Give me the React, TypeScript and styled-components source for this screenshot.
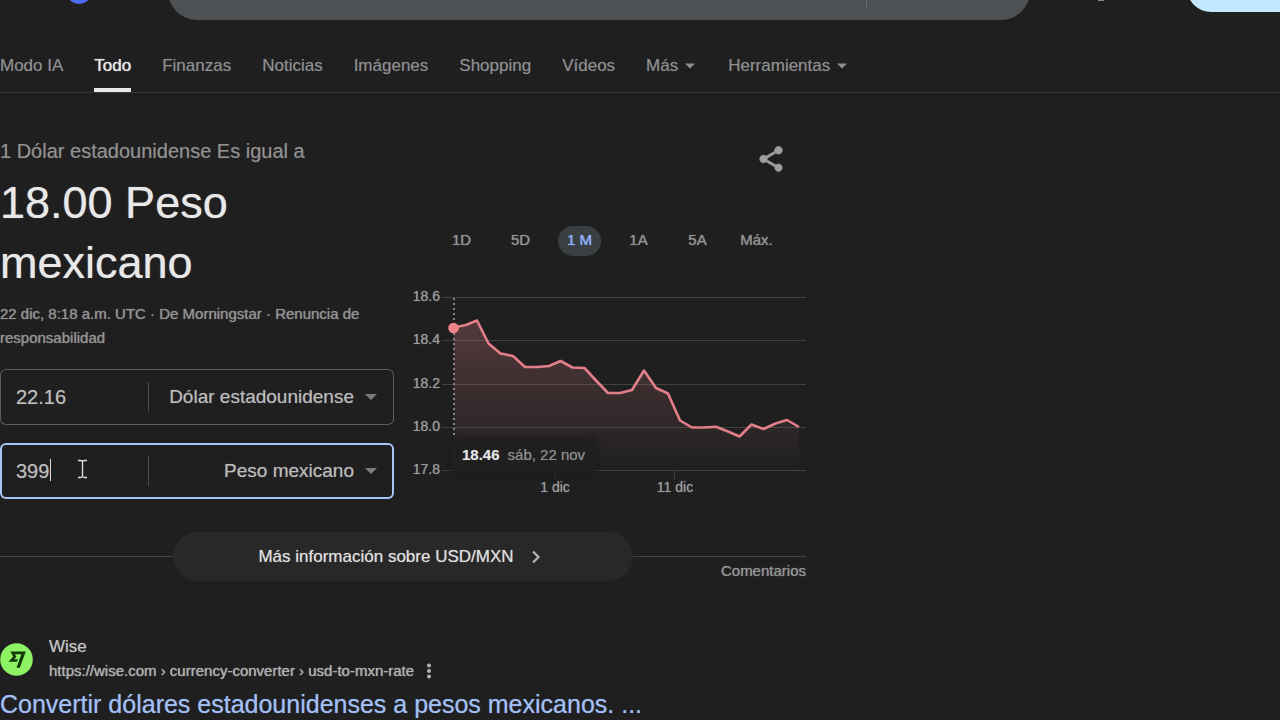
import React from "react";
import styled, { createGlobalStyle } from "styled-components";

const GlobalStyle = createGlobalStyle`
  * { box-sizing: border-box; }
  body {
    margin: 0;
    background: #1f1f1f;
    color: #e8e8e8;
    font-family: "Liberation Sans", Arial, sans-serif;
  }
  button, input, select { font-family: inherit; }
  h1, h2, p { margin: 0; font-weight: 400; }
  a { color: inherit; text-decoration: none; }
`;

const Page = styled.div`
  min-height: 100vh;
  overflow: hidden;
`;

const Header = styled.header`
  display: flex;
  align-items: flex-start;
  height: 20px;
  overflow: hidden;
`;

const Logo = styled.a`
  flex: 0 0 168px;
  height: 20px;
  svg { display: block; }
`;

const SearchForm = styled.form`
  flex: 0 1 862px;
  display: flex;
  align-items: center;
  align-self: flex-end;
  height: 58px;
  padding: 0 163px 0 28px;
  border-radius: 29px;
  background: #4d5154;
`;

const SearchInput = styled.input`
  flex: 1;
  min-width: 0;
  height: 32px;
  padding: 0;
  border: 0;
  border-right: 1px solid #6b6f72;
  outline: 0;
  background: transparent;
  color: #e8e8e8;
  font-size: 20px;
`;

const AppsButton = styled.button`
  display: flex;
  margin: 0 83px 0 68px;
  padding: 0;
  border: 0;
  background: transparent;
`;

const SignIn = styled.button`
  flex: 1 0 120px;
  align-self: flex-end;
  height: 48px;
  margin: 0 -40px 8px 0;
  border: 0;
  border-radius: 24px;
  background: #c2e7ff;
`;

const Nav = styled.nav`
  display: flex;
  gap: 31px;
  height: 73px;
  border-bottom: 1px solid #353535;
`;

const NavLink = styled.a<{ $active?: boolean }>`
  display: flex;
  align-items: center;
  gap: 7px;
  padding-top: 24px;
  border-bottom: 4px solid ${(p) => (p.$active ? "#e8e8e8" : "transparent")};
  color: ${(p) => (p.$active ? "#e8e8e8" : "#8e9092")};
  text-shadow: ${(p) => (p.$active ? "0 0 1px #e8e8e8" : "0 0 1px #505050")};
  font-size: 17px;
  line-height: 24px;
  white-space: nowrap;
`;

const Tools = styled.div`
  display: flex;
  margin-left: 2px;
`;

const Main = styled.main`
  max-width: 806px;
  padding-top: 43px;
`;

const Converter = styled.section`
  display: grid;
  grid-template-columns: 394px 1fr;
`;

const BaseLine = styled.p`
  color: #929292;
  font-size: 20px;
  line-height: 30px;
  text-shadow: 0 0 1px #505050;
`;

const Amount = styled.h1`
  margin-top: 7px;
  max-width: 300px;
  color: #e8e8e8;
  font-size: 45px;
  line-height: 60px;
  text-shadow: 0 0 1px #a0a0a0;
`;

const Meta = styled.p`
  margin-top: 9px;
  color: #929292;
  font-size: 15px;
  line-height: 24px;
  text-shadow: 0 0 1px #929292;
`;

const Fields = styled.div`
  display: grid;
  gap: 18px;
  margin-top: 19px;
`;

const Field = styled.div<{ $focused?: boolean }>`
  position: relative;
  display: flex;
  align-items: center;
  height: 56px;
  padding: 0 17px 0 16px;
  border-radius: 6px;
  box-shadow: inset 0 0 0 ${(p) => (p.$focused ? "2px #a8c3f5" : "1px #5c5e60")};
`;

const ValueInput = styled.input`
  flex: 0 0 133px;
  width: 133px;
  height: 30px;
  padding: 0;
  border: 0;
  border-right: 1px solid #4a4c4e;
  outline: 0;
  background: transparent;
  color: #bdbdbd;
  font-size: 20px;
  line-height: 30px;
  text-shadow: 0 0 1px #707070;
`;

const CurrencySelect = styled.select`
  flex: 1;
  min-width: 0;
  height: 30px;
  margin-right: 11px;
  padding: 0;
  border: 0;
  outline: 0;
  appearance: none;
  background: transparent;
  color: #bdbdbd;
  font-size: 19px;
  line-height: 30px;
  text-align: right;
  text-align-last: right;
  text-shadow: 0 0 1px #707070;
`;

const TextCaret = styled.span`
  position: absolute;
  left: 50px;
  top: 16px;
  width: 1px;
  height: 22px;
  background: #dcdcdc;
`;

const Pointer = styled.svg`
  position: absolute;
  left: 77px;
  top: 16px;
`;

const ChartPane = styled.div`
  display: flex;
  flex-direction: column;
  padding-left: 19px;
`;

const ShareButton = styled.button`
  align-self: flex-end;
  display: flex;
  margin: 8px 20px 0 0;
  padding: 0;
  border: 0;
  background: transparent;
`;

const Ranges = styled.div`
  display: flex;
  gap: 16px;
  margin: 52px 0 0 27px;
`;

const RangeButton = styled.button<{ $active?: boolean }>`
  flex: 0 0 43px;
  height: 30px;
  padding: 0 0 2px;
  border: 0;
  border-radius: 15px;
  background: ${(p) => (p.$active ? "#3a4042" : "transparent")};
  color: ${(p) => (p.$active ? "#8fb0f8" : "#929292")};
  text-shadow: 0 0 1px ${(p) => (p.$active ? "#8fb0f8" : "#929292")};
  font-size: 15px;
  line-height: 28px;
  white-space: nowrap;
`;

const ChartFrame = styled.div`
  position: relative;
  margin-top: 30px;
`;

const ChartSvg = styled.svg`
  display: block;
  width: 100%;
  text {
    font-size: 14px;
    fill: #9a9d9f;
    text-shadow: 0 0 1px #808080;
  }
`;

const Tooltip = styled.div`
  position: absolute;
  left: 39px;
  top: 152px;
  display: flex;
  gap: 8px;
  height: 36px;
  padding: 0 11px 0 10px;
  border-radius: 4px;
  background: #1f1f1f;
  box-shadow: 0 1px 6px #1a1a1a;
  color: #8f8f8f;
  font-size: 15px;
  line-height: 34px;
  white-space: nowrap;
  text-shadow: 0 0 1px #606060;
  strong { color: #e8e8e8; }
`;

const MoreRow = styled.div`
  display: grid;
  grid-template-columns: 1fr 460px 1fr;
  grid-template-rows: 49px;
  margin-top: 33px;
`;

const Rule = styled.div`
  margin-top: 24px;
  padding-top: 2px;
  border-top: 1px solid #444;
  text-align: right;
`;

const MoreLink = styled.a`
  display: flex;
  align-items: center;
  justify-content: center;
  gap: 10px;
  border-radius: 25px;
  background: #282828;
  color: #e0e0e0;
  font-size: 17px;
  text-shadow: 0 0 1px #909090;
`;

const Feedback = styled.a`
  color: #929292;
  font-size: 15px;
  line-height: 24px;
  text-shadow: 0 0 1px #929292;
`;

const Result = styled.article`
  margin-top: 54px;
`;

const Source = styled.div`
  display: flex;
  align-items: center;
  gap: 16px;
`;

const SiteName = styled.div`
  color: #c4c4c4;
  font-size: 17px;
  line-height: 24px;
  text-shadow: 0 0 1px #808080;
`;

const SiteUrl = styled.div`
  display: flex;
  align-items: center;
  gap: 3px;
  color: #b0b0b0;
  font-size: 15px;
  line-height: 24px;
  text-shadow: 0 0 1px #b0b0b0;
`;

const MenuButton = styled.button`
  display: flex;
  padding: 0;
  border: 0;
  background: transparent;
`;

const ResultTitle = styled.h2`
  margin-top: 5px;
  color: #a3c0f5;
  font-size: 25px;
  line-height: 32px;
  white-space: nowrap;
  text-shadow: 0 0 1px #6076a0;
`;

function DownArrow({ size, color }: { size: number; color: string }) {
  return (
    <svg width={size} height={size} viewBox="0 0 12 12" aria-hidden="true">
      <path d="M0 3h12L6 9z" fill={color} />
    </svg>
  );
}

const links = ["Modo IA", "Todo", "Finanzas", "Noticias", "Imágenes", "Shopping", "Vídeos"];
const ranges = ["1D", "5D", "1 M", "1A", "5A", "Máx."];

const gridLines = [
  { y: 11, label: "18.6" },
  { y: 54, label: "18.4" },
  { y: 98, label: "18.2" },
  { y: 141, label: "18.0" },
  { y: 184, label: "17.8" },
];

const rates = [
  [41, 41.5], [53, 39], [64, 34.5], [75.5, 57.5], [87.5, 67.5], [100, 70], [112, 81], [124, 81],
  [136, 80], [147.5, 75], [159.5, 81.5], [171.5, 82], [183.5, 95], [195, 107], [207, 107],
  [219, 104], [231, 84.5], [243, 102], [255, 107.5], [267, 134.5], [279, 141.5], [291, 141.5],
  [303, 140.8], [315, 145.5], [326.5, 150.5], [338.5, 138.5], [350.5, 143], [362.5, 137.5],
  [374, 134], [386, 141],
];
const linePoints = rates.map((p) => p.join(",")).join(" ");

function RateChart() {
  return (
    <ChartFrame>
      <ChartSvg viewBox="0 0 393 210" role="img" aria-label="USD/MXN, 1 M">
        <defs>
          <linearGradient id="fade" gradientUnits="userSpaceOnUse" x1="0" y1="34" x2="0" y2="184">
            <stop offset="0" stopColor="#e8868f" stopOpacity="0.26" />
            <stop offset="1" stopColor="#e8868f" stopOpacity="0" />
          </linearGradient>
        </defs>
        {gridLines.map((g) => (
          <g key={g.label}>
            <rect x="29" y={g.y} width="364" height="1" fill="#414141" />
            <text x="27" y={g.y + 4} textAnchor="end">{g.label}</text>
          </g>
        ))}
        <rect x="142" y="185" width="1" height="8" fill="#414141" />
        <rect x="261" y="185" width="1" height="8" fill="#414141" />
        <text x="142" y="206" textAnchor="middle">1 dic</text>
        <text x="262" y="206" textAnchor="middle">11 dic</text>
        <polygon points={`41,184 ${linePoints} 386,184`} fill="url(#fade)" />
        <line x1="41" y1="12" x2="41" y2="152" stroke="#868686" strokeWidth="2" strokeDasharray="2 3" />
        <polyline points={linePoints} fill="none" stroke="#e27f89" strokeWidth="2.6" strokeLinejoin="round" />
        <circle cx="40.5" cy="42" r="5.3" fill="#f0828c" />
      </ChartSvg>
      <Tooltip>
        <strong>18.46</strong>
        <span>sáb, 22 nov</span>
      </Tooltip>
    </ChartFrame>
  );
}

export default function App() {
  return (
    <Page>
      <GlobalStyle />
      <Header>
        <Logo href="#" aria-label="Google">
          <svg width="168" height="20" viewBox="0 0 168 20" aria-hidden="true">
            <ellipse cx="79" cy="-5" rx="9" ry="7" fill="none" stroke="#4a6cf0" strokeWidth="4" />
          </svg>
        </Logo>
        <SearchForm role="search">
          <SearchInput type="text" aria-label="Buscar" />
        </SearchForm>
        <AppsButton type="button" aria-label="Aplicaciones">
          <svg width="6" height="1" aria-hidden="true"><rect width="6" height="1" fill="#8a8a8a" /></svg>
        </AppsButton>
        <SignIn type="button" aria-label="Acceder" />
      </Header>

      <Nav>
        {links.map((l) => (
          <NavLink key={l} href="#" $active={l === "Todo"}>{l}</NavLink>
        ))}
        <NavLink href="#">Más <DownArrow size={10} color="#8e9092" /></NavLink>
        <Tools>
          <NavLink href="#">Herramientas <DownArrow size={10} color="#8e9092" /></NavLink>
        </Tools>
      </Nav>

      <Main>
        <Converter>
          <div>
            <BaseLine>1 Dólar estadounidense Es igual a</BaseLine>
            <Amount>18.00 Peso mexicano</Amount>
            <Meta>
              <span>22 dic, 8:18 a.m. UTC ·</span> <a href="#">De Morningstar</a> <span>·</span>{" "}
              <a href="#">Renuncia de responsabilidad</a>
            </Meta>
            <Fields>
              <Field>
                <ValueInput aria-label="Importe en dólares" defaultValue="22.16" />
                <CurrencySelect aria-label="Moneda de origen">
                  <option>Dólar estadounidense</option>
                </CurrencySelect>
                <DownArrow size={12} color="#7c7c7c" />
              </Field>
              <Field $focused>
                <ValueInput aria-label="Importe en pesos" defaultValue="399" />
                <CurrencySelect aria-label="Moneda de destino">
                  <option>Peso mexicano</option>
                </CurrencySelect>
                <DownArrow size={12} color="#7c7c7c" />
                <TextCaret />
                <Pointer width="11" height="20" viewBox="0 0 11 20" aria-hidden="true">
                  <path d="M1 1.5h2.5q2 0 2 1.5q0-1.5 2-1.5H10M5.5 2v16M1 18.5h2.5q2 0 2-1.5q0 1.5 2 1.5H10" fill="none" stroke="#dedede" strokeWidth="1.3" />
                </Pointer>
              </Field>
            </Fields>
          </div>

          <ChartPane>
            <ShareButton type="button" aria-label="Compartir">
              <svg width="30" height="30" viewBox="0 0 24 24" fill="#9e9e9e" stroke="#9e9e9e" strokeWidth="0.6" aria-hidden="true">
                <path d="M18 16.08c-.76 0-1.44.3-1.96.77L8.91 12.7c.05-.23.09-.46.09-.7s-.04-.47-.09-.7l7.05-4.11c.54.5 1.25.81 2.04.81 1.66 0 3-1.34 3-3s-1.34-3-3-3-3 1.34-3 3c0 .24.04.47.09.7L8.04 9.81C7.5 9.31 6.79 9 6 9c-1.66 0-3 1.34-3 3s1.34 3 3 3c.79 0 1.5-.31 2.04-.81l7.12 4.16c-.05.21-.08.43-.08.65 0 1.61 1.31 2.92 2.92 2.92s2.92-1.31 2.92-2.92-1.31-2.92-2.92-2.92z" />
              </svg>
            </ShareButton>
            <Ranges>
              {ranges.map((r) => (
                <RangeButton key={r} type="button" $active={r === "1 M"}>{r}</RangeButton>
              ))}
            </Ranges>
            <RateChart />
          </ChartPane>
        </Converter>

        <MoreRow>
          <Rule />
          <MoreLink href="#">
            Más información sobre USD/MXN
            <svg width="24" height="24" viewBox="0 0 24 24" aria-hidden="true">
              <path d="M9 6.5l5.5 5.5L9 17.5" fill="none" stroke="#b4b4b4" strokeWidth="2.2" />
            </svg>
          </MoreLink>
          <Rule>
            <Feedback href="#">Comentarios</Feedback>
          </Rule>
        </MoreRow>

        <Result>
          <Source>
            <svg width="33" height="33" viewBox="0 0 33 33" aria-hidden="true">
              <circle cx="16.5" cy="16.5" r="16.3" fill="#8df365" />
              <g transform="translate(8.5 8) scale(.72)">
                <path fill="#123a08" d="M6.488 7.469 0 15.05h11.585l1.301-3.576H7.922l3.033-3.507.01-.092L8.993 4.48h8.873l-6.878 18.925h4.706L24 .595H2.543l3.945 6.874Z" />
              </g>
            </svg>
            <div>
              <SiteName>Wise</SiteName>
              <SiteUrl>
                <span>https://wise.com › currency-converter › usd-to-mxn-rate</span>
                <MenuButton type="button" aria-label="Acerca de este resultado">
                  <svg width="24" height="24" viewBox="0 0 24 24" fill="#b4b4b4" aria-hidden="true">
                    <circle cx="12" cy="6.5" r="2" />
                    <circle cx="12" cy="12" r="2" />
                    <circle cx="12" cy="17.5" r="2" />
                  </svg>
                </MenuButton>
              </SiteUrl>
            </div>
          </Source>
          <ResultTitle>
            <a href="#">Convertir dólares estadounidenses a pesos mexicanos. ...</a>
          </ResultTitle>
        </Result>
      </Main>
    </Page>
  );
}
